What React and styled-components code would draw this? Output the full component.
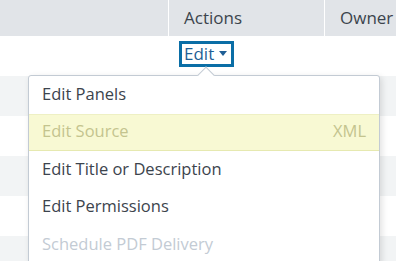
import React from 'react';
import styled, { createGlobalStyle } from 'styled-components';

const GlobalStyle = createGlobalStyle`
  html, body {
    margin: 0;
    padding: 0;
    background: #ffffff;
  }
  body {
    font-family: "Open Sans", "Liberation Sans", sans-serif;
    color: #3c444d;
    overflow: hidden;
  }
`;

const rows = [false, true, false, true, false, true];

const menuItems = [
  { label: 'Edit Panels' },
  { label: 'Edit Source', hint: 'XML', active: true },
  { label: 'Edit Title or Description' },
  { label: 'Edit Permissions' },
  { label: 'Schedule PDF Delivery', disabled: true },
];

const App = () => {
  return (
    <>
      <GlobalStyle />
      <Wrap>
        <Table>
          <HeaderRow>
            <HeadCell />
            <HeadCell $divider>Actions</HeadCell>
            <HeadCell $divider>Owner</HeadCell>
          </HeaderRow>
          {rows.map((striped, i) => (
            <Row key={i} $striped={striped}>
              <Cell />
              <Cell>
                {i === 0 && (
                  <EditButton>
                    Edit
                    <Caret viewBox="0 0 8 5" aria-hidden="true">
                      <path d="M0 0h8L4 5z" fill="currentColor" />
                    </Caret>
                  </EditButton>
                )}
              </Cell>
              <Cell />
            </Row>
          ))}
        </Table>

        <Menu>
          <MenuArrow />
          {menuItems.map(item => (
            <MenuItem
              key={item.label}
              $active={item.active}
              $disabled={item.disabled}
            >
              <span>{item.label}</span>
              {item.hint && <Hint>{item.hint}</Hint>}
            </MenuItem>
          ))}
        </Menu>
      </Wrap>
    </>
  );
};

const Wrap = styled.div`
  position: relative;
  width: 396px;
  height: 261px;
  overflow: hidden;
`;

const Table = styled.div`
  display: flex;
  flex-direction: column;
`;

const HeaderRow = styled.div`
  display: grid;
  grid-template-columns: 168px 156px 1fr;
  height: 36px;
  background: #e1e4e8;
`;

const HeadCell = styled.div`
  display: flex;
  align-items: center;
  padding-left: 15px;
  padding-bottom: 2px;
  font-size: 17px;
  color: #3c444d;
  white-space: nowrap;
  border-left: ${props => (props.$divider ? '1px solid #ffffff' : 'none')};
`;

const Row = styled.div`
  display: grid;
  grid-template-columns: 168px 156px 1fr;
  height: 40px;
  background: ${props => (props.$striped ? '#f2f4f5' : '#ffffff')};
`;

const Cell = styled.div`
  display: flex;
  align-items: center;
  padding-left: 11px;
`;

const EditButton = styled.button`
  display: flex;
  align-items: center;
  gap: 5px;
  height: 26px;
  padding: 0 4px 1px 2px;
  margin-top: -4px;
  border: 3px solid #0a6ea6;
  background: #ffffff;
  font-family: inherit;
  font-size: 17px;
  color: #1f5f96;
`;

const Caret = styled.svg`
  width: 8px;
  height: 5px;
  color: #1f5f96;
`;

const Menu = styled.div`
  position: absolute;
  top: 75px;
  left: 28px;
  width: 350px;
  border: 1px solid #c3cbd4;
  border-radius: 3px;
  background: #ffffff;
  box-shadow: 2px 2px 6px rgba(0, 0, 0, 0.12);
`;

const MenuArrow = styled.div`
  position: absolute;
  top: -7px;
  left: 171px;
  width: 11px;
  height: 11px;
  background: #ffffff;
  border-top: 1px solid #c3cbd4;
  border-left: 1px solid #c3cbd4;
  transform: rotate(45deg);
`;

const MenuItem = styled.div`
  position: relative;
  display: flex;
  align-items: center;
  justify-content: space-between;
  height: 37.5px;
  box-sizing: border-box;
  padding: 0 13px 3px;
  font-size: 16.5px;
  color: ${props =>
    props.$disabled ? '#c3cbd4' : props.$active ? '#c4c48e' : '#3c444d'};
  background: ${props => (props.$active ? '#f8f9d3' : 'transparent')};
  border-top: ${props => (props.$active ? '1px solid #eef0c4' : 'none')};
  border-bottom: ${props => (props.$active ? '1px solid #e6e9b0' : 'none')};
`;

const Hint = styled.span`
  color: #c4c48e;
`;

export default App;
